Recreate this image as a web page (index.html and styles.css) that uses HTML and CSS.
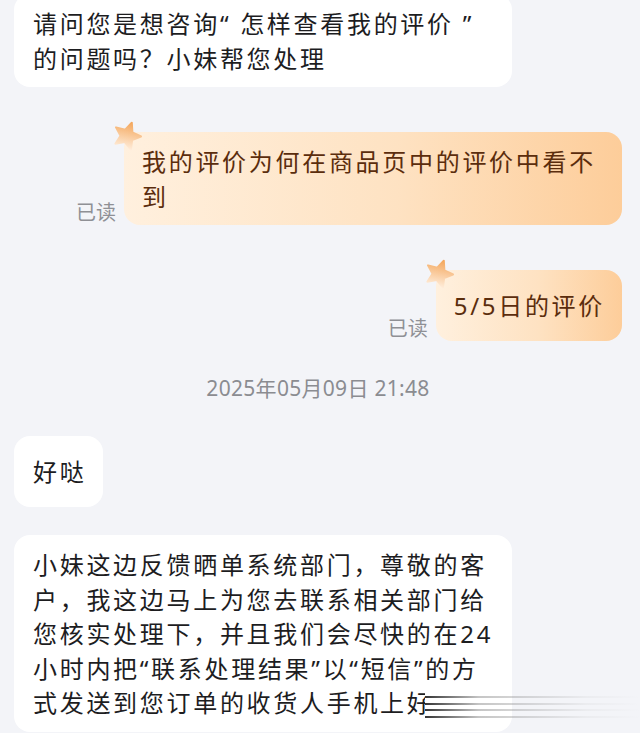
FILE: index.html
```html
<!DOCTYPE html>
<html lang="zh-CN">

<head>
    <meta charset="UTF-8">
    <meta name="viewport" content="width=device-width, initial-scale=1.0">
    <title>在线客服</title>
    <link rel="stylesheet" href="styles.css">
</head>

<body>
    <div class="chat">
        <div class="msg msg-in">
            <div class="bubble bubble-long">请问您是想咨询“ 怎样查看我的评价 ”<br>的问题吗？小妹帮您处理</div>
        </div>

        <div class="msg msg-out">
            <span class="read">已读</span>
            <div class="bubble bubble-out bubble-long">
                <svg class="star" viewBox="0 0 30 30">
                    <defs>
                        <linearGradient id="starFill" x1="0.6" y1="0" x2="0.4" y2="1">
                            <stop offset="0" stop-color="#f4a85e" />
                            <stop offset="1" stop-color="#ffeedd" />
                        </linearGradient>
                    </defs>
                    <path d="M19.8 1.8 L20.4 11.4 L29 15.5 L20.1 19 L18.9 28.5 L12.8 21.1 L3.4 22.8 L8.5 14.8 L4 6.4 L13.2 8.8 Z"
                        fill="url(#starFill)" stroke="url(#starFill)" stroke-width="2" stroke-linejoin="round" />
                </svg>
                我的评价为何在商品页中的评价中看不<br>到
            </div>
        </div>

        <div class="msg msg-out">
            <span class="read">已读</span>
            <div class="bubble bubble-out">
                <svg class="star" viewBox="0 0 30 30">
                    <path d="M19.8 1.8 L20.4 11.4 L29 15.5 L20.1 19 L18.9 28.5 L12.8 21.1 L3.4 22.8 L8.5 14.8 L4 6.4 L13.2 8.8 Z"
                        fill="url(#starFill)" stroke="url(#starFill)" stroke-width="2" stroke-linejoin="round" />
                </svg>
                5/5日的评价
            </div>
        </div>

        <div class="time">2025年05月09日 21:48</div>

        <div class="msg msg-in">
            <div class="bubble">好哒</div>
        </div>

        <div class="msg msg-in msg-follow">
            <div class="bubble bubble-long">小妹这边反馈晒单系统部门，尊敬的客<br>户，我这边马上为您去联系相关部门给<br>您核实处理下，并且我们会尽快的在24<br>小时内把“联系处理结果”以“短信”的方<br>式发送到您订单的收货人手机上好
                <span class="fade"><i></i><i></i><i></i><i></i></span>
            </div>
        </div>
    </div>
</body>

</html>
```

FILE: styles.css
```css
body {
    margin: 0;
    background-color: #f3f4f8;
    font-family: "Noto Sans", "Noto Sans CJK SC", sans-serif;
    height: 733px;
    overflow: hidden;
}

.chat {
    display: flex;
    flex-direction: column;
    margin-top: -6px;
    padding: 0 18px 0 14px;
}

.msg {
    display: flex;
    margin-top: 45px;
}

.msg:first-child {
    margin-top: 0;
}

.msg-follow {
    margin-top: 28px;
}

.time + .msg {
    margin-top: 33px;
}

.msg-out {
    justify-content: flex-end;
    align-items: flex-end;
    gap: 8px;
}

.bubble {
    position: relative;
    box-sizing: border-box;
    display: flex;
    align-items: center;
    min-height: 71px;
    max-width: 498px;
    padding: 13px 17px 11px 19px;
    border-radius: 16px;
    background-color: #fff;
    color: #1d1d1f;
    font-size: 24px;
    line-height: 34.5px;
    letter-spacing: 2.7px;
}

.bubble-long {
    display: block;
    width: 498px;
}

.bubble-out {
    background: linear-gradient(to right, #fff0de 0%, #fee2c2 55%, #fdcd9a 100%);
    color: #5b2d0d;
    padding-left: 18px;
}

.star {
    position: absolute;
    left: -12px;
    top: -11px;
    width: 30px;
    height: 30px;
}

.read {
    font-size: 20px;
    line-height: 24px;
    color: #8f9095;
}

.time {
    margin-top: 32px;
    text-align: center;
    font-size: 21px;
    line-height: 30px;
    letter-spacing: 0.3px;
    color: #8b8c91;
}

.fade {
    position: absolute;
    left: 411px;
    top: 156px;
    width: 215px;
    height: 28px;
    padding-top: 5px;
    box-sizing: border-box;
    background: linear-gradient(to right, #fff 87px, rgba(243, 244, 248, 0) 87px);
}

.fade i {
    display: block;
    height: 2px;
    margin-bottom: 4.5px;
    background: linear-gradient(to right, rgba(30, 30, 30, 0.9) 0, rgba(110, 110, 110, 0.4) 25%, rgba(190, 190, 190, 0.15) 75%, rgba(220, 220, 220, 0) 100%);
}
```
